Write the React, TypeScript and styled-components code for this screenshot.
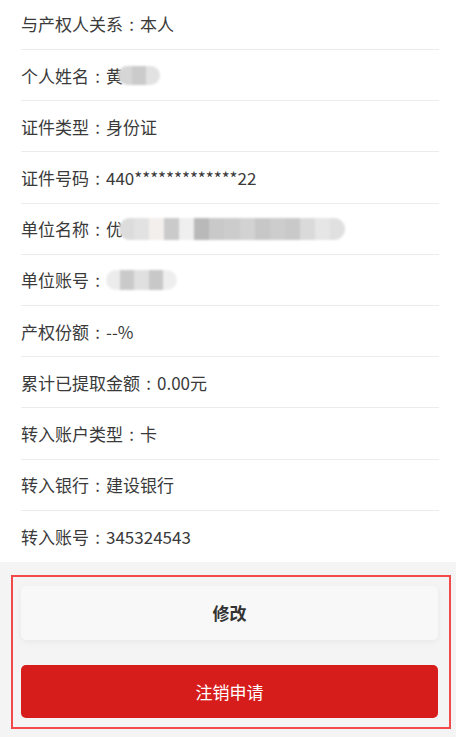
import React from 'react'
import styled, { createGlobalStyle } from 'styled-components'

const GlobalStyle = createGlobalStyle`
  html, body {
    margin: 0;
    padding: 0;
    background: #ffffff;
  }
  body {
    font-family: "Noto Sans CJK SC", "Microsoft YaHei", "Noto Sans", sans-serif;
    color: #333333;
  }
`

const Page = styled.div`
  width: 456px;
  height: 737px;
  overflow: hidden;
  display: flex;
  flex-direction: column;
  background: #f4f4f4;
`

const InfoList = styled.div`
  background: #ffffff;
  padding: 0 17px 0 21px;
  margin-top: -1.2px;
`

const InfoRow = styled.div`
  box-sizing: border-box;
  height: 51.2px;
  display: flex;
  align-items: center;
  font-size: 17px;
  color: #3a3a3a;
  border-bottom: 1px solid #ececec;
  white-space: nowrap;

  &:last-child {
    border-bottom: 0;
  }
`

// 居中的冒号，和雅黑的全角冒号一样占一个字宽
const Colon = styled.span`
  display: inline-block;
  width: 1em;
  text-align: center;
`

const Mosaic = styled.span<{ $w: number; $h: number; $shift?: number }>`
  display: inline-flex;
  width: ${(p) => p.$w}px;
  height: ${(p) => p.$h}px;
  margin-left: ${(p) => p.$shift ?? 0}px;
  border-radius: ${(p) => p.$h / 2}px;
  overflow: hidden;
  filter: blur(0.8px);
`

const Tile = styled.span<{ $c: string }>`
  flex: 1;
  background: ${(p) => p.$c};
`

const Footer = styled.div`
  flex: 1;
  padding: 13px 5px 9px 11px;
`

const Outline = styled.div`
  border: 2px solid #f24a4a;
  padding: 9px 11px 9px 8px;
  display: flex;
  flex-direction: column;
  gap: 25px;
`

const ActionButton = styled.button<{ $danger?: boolean }>`
  height: ${(p) => (p.$danger ? 53 : 54)}px;
  border: 0;
  border-radius: 5px;
  font-family: inherit;
  font-size: 17px;
  font-weight: ${(p) => (p.$danger ? 400 : 700)};
  color: ${(p) => (p.$danger ? '#ffffff' : '#333333')};
  background: ${(p) => (p.$danger ? '#d71c1c' : '#f8f8f8')};
  box-shadow: ${(p) => (p.$danger ? 'none' : '0 2px 6px rgba(0, 0, 0, 0.05)')};
  cursor: pointer;
`

type Row = { label: string; value: React.ReactNode }

const Blur: React.FC<{ w: number; h: number; shift?: number; tiles: string[] }> = ({
  w,
  h,
  shift,
  tiles,
}) => (
  <Mosaic $w={w} $h={h} $shift={shift}>
    {tiles.map((c, i) => (
      <Tile key={i} $c={c} />
    ))}
  </Mosaic>
)

const rows: Row[] = [
  { label: '与产权人关系', value: '本人' },
  {
    label: '个人姓名',
    value: (
      <>
        黄
        <Blur w={42} h={19} shift={-5} tiles={['#d6d6d6', '#cbcbcb', '#e2e2e2']} />
      </>
    ),
  },
  { label: '证件类型', value: '身份证' },
  { label: '证件号码', value: '440*************22' },
  {
    label: '单位名称',
    value: (
      <>
        优
        <Blur
          w={226}
          h={22}
          shift={-4}
          tiles={[
            '#dcdcdc',
            '#e2e2e2',
            '#f3efed',
            '#cacaca',
            '#efefef',
            '#b9b9b9',
            '#c9c9c9',
            '#cccccc',
            '#d2d2d2',
            '#c7c7c7',
            '#cdcdcd',
            '#c9c9c9',
            '#dadada',
            '#e6e6e6',
            '#e0e0e0',
          ]}
        />
      </>
    ),
  },
  {
    label: '单位账号',
    value: (
      <Blur w={71} h={20} tiles={['#ececec', '#cacaca', '#e0e0e0', '#c8c8c8', '#eeeeee']} />
    ),
  },
  { label: '产权份额', value: '--%' },
  { label: '累计已提取金额', value: '0.00元' },
  { label: '转入账户类型', value: '卡' },
  { label: '转入银行', value: '建设银行' },
  { label: '转入账号', value: '345324543' },
]

export default function App() {
  return (
    <>
      <GlobalStyle />
      <Page>
        <InfoList>
          {rows.map((r) => (
            <InfoRow key={r.label}>
              {r.label}
              <Colon>:</Colon>
              {r.value}
            </InfoRow>
          ))}
        </InfoList>
        <Footer>
          <Outline>
            <ActionButton>修改</ActionButton>
            <ActionButton $danger>注销申请</ActionButton>
          </Outline>
        </Footer>
      </Page>
    </>
  )
}
